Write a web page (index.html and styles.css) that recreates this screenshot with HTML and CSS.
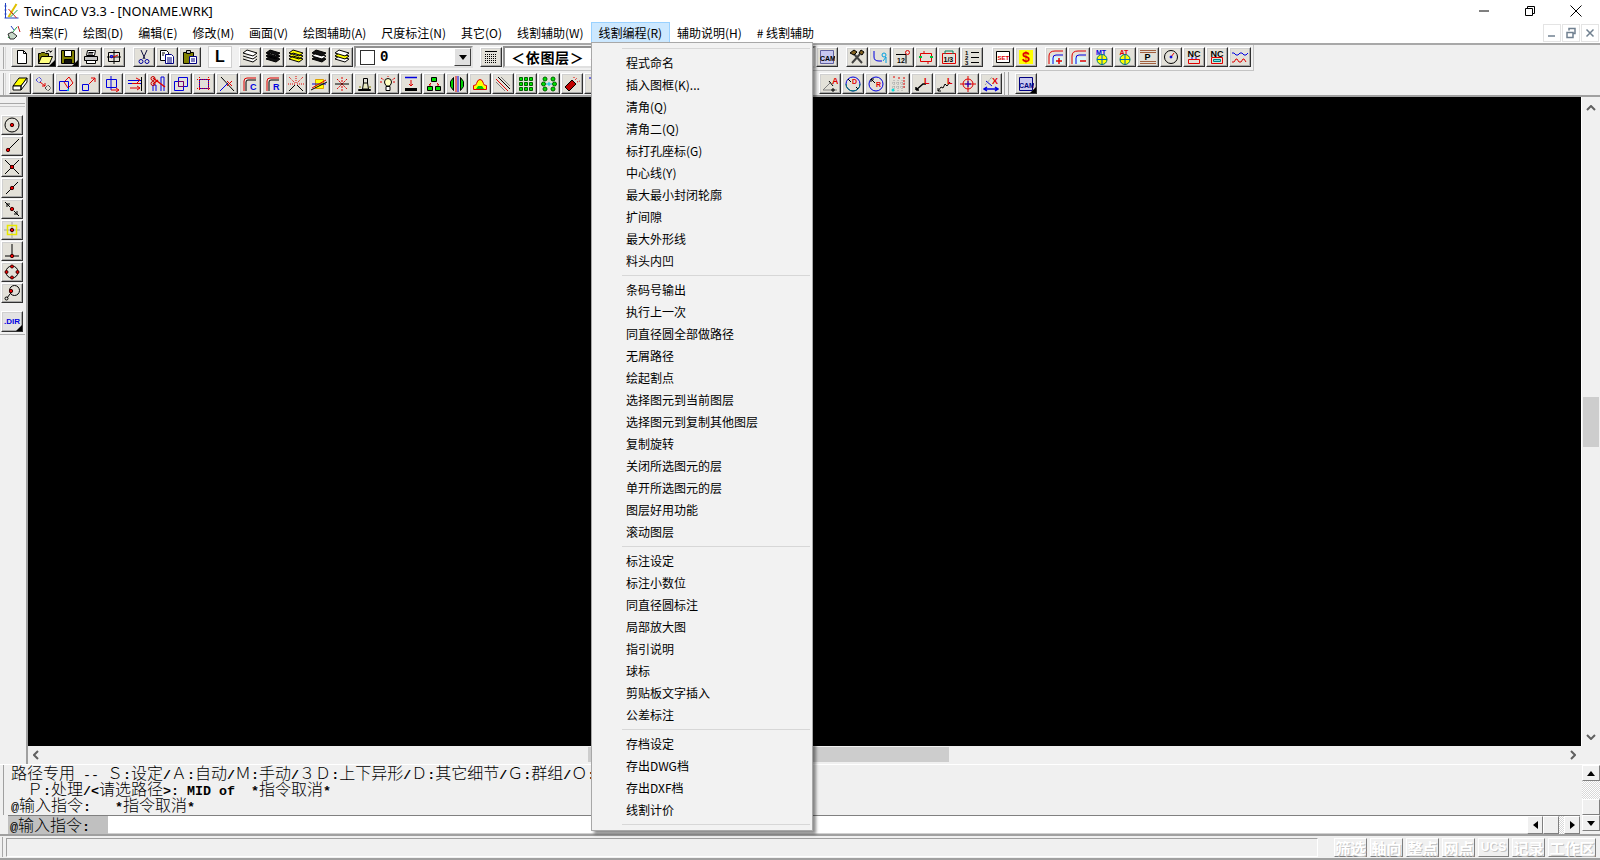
FILE: index.html
```html
<!DOCTYPE html>
<html lang="zh">
<head>
<meta charset="utf-8">
<title>TwinCAD V3.3</title>
<link rel="stylesheet" href="styles.css">
</head>
<body>
<header class="title">
  <svg class="app-ico" viewBox="0 0 16 18"><path stroke="#2040c0" d="M2 1v15M1 16h14M1 4h2M1 8h2M1 12h2"/><path stroke="#e0c000" stroke-width="2" d="M5 15L13 2"/><path stroke="#d02020" d="M5 7l8 9"/><path stroke="#20a040" d="M7 15l7-7"/></svg>
  <span class="title-text">TwinCAD V3.3 - [NONAME.WRK]</span>
  <div class="win-btns">
    <svg viewBox="0 0 12 12"><path d="M1 6h10"/></svg>
    <svg viewBox="0 0 12 12"><path d="M1.5 3.5h7v7h-7zM3.5 3.5v-2h7v7h-2"/></svg>
    <svg viewBox="0 0 12 12"><path d="M.5 .5l11 11M11.5 .5l-11 11"/></svg>
  </div>
</header>
<nav class="menubar">
  <svg class="mdi-ico" viewBox="0 0 16 16"><path stroke="#20a040" d="M2 14L11 3"/><path fill="#c8d8c8" stroke="#303030" d="M2 10l4-2 5 4-3 3H4z"/><path stroke="#c02020" d="M12 2l2 6"/><path stroke="#2040c0" d="M5 2l3 4"/></svg>
  <span class="mi">档案(F)</span><span class="mi">绘图(D)</span><span class="mi">编辑(E)</span><span class="mi">修改(M)</span><span class="mi">画面(V)</span><span class="mi">绘图辅助(A)</span><span class="mi">尺度标注(N)</span><span class="mi">其它(O)</span><span class="mi">线割辅助(W)</span><span class="mi mi-on">线割编程(R)</span><span class="mi">辅助说明(H)</span><span class="mi"># 线割辅助</span>
  <div class="mdi-btns">
    <span class="mdi-b"><svg viewBox="0 0 12 12"><path d="M2 9h7"/></svg></span>
    <span class="mdi-b"><svg viewBox="0 0 12 12"><path d="M2 5.5h6v5H2zM4 3.5V1.5h6v5H8"/></svg></span>
    <span class="mdi-b"><svg viewBox="0 0 12 12"><path d="M2.5 2.5l7 7M9.5 2.5l-7 7"/></svg></span>
  </div>
</nav>

<section class="toolbars">
  <div class="tb-row r1">
    <span class="grip"></span>
    <span class="btn"><svg class="i" viewBox="0 0 16 16"><path fill="#fff" d="M3.5 1.5h6l3 3v10h-9z"/><path d="M9.5 1.5v3h3"/></svg></span>
    <span class="btn more"><svg class="i" viewBox="0 0 16 16"><path fill="#808000" d="M1.5 14.5v-10h2l1-1h3l1 1h3v3h-7l-3 7z"/><path fill="#ffff80" d="M1.5 14.5l3-7h11l-3 7z"/><path d="M9 3q3-3 5 0l-1 0m1 0l1-1.500"/></svg></span>
    <span class="btn more"><svg class="i" viewBox="0 0 16 16"><path fill="#808000" d="M1.500 1.500h13v13h-13z"/><path fill="#fff" d="M4.500 1.500h7v6h-7z"/><path fill="#101010" d="M4.500 10.500h7v4h-7z"/></svg></span>
    <span class="btn"><svg class="i" viewBox="0 0 16 16"><path fill="#fff" d="M4.500 1.500h8l-1 5h-8z"/><path fill="#c8c8c8" d="M1.500 7.500h13v4h-13z"/><path fill="#fff" d="M3.500 11.500h9v3h-9z"/><path d="M5.500 3.500h5M5 5h5"/></svg></span>
    <span class="btn"><svg class="i" viewBox="0 0 16 16"><path d="M2.500 3.500h11v9h-11zM8 1v14M1 8h14"/><path stroke="#e00000" d="M5 9l7-3"/><path stroke="#0000e0" d="M4.500 6.500h2v2h-2z"/></svg></span>
    <span class="gap g8"></span>
    <span class="btn"><svg class="i" viewBox="0 0 16 16"><path stroke="#101040" d="M5 1l4 9M11 1l-4 9"/><circle cx="5" cy="12.500" r="2" stroke="#0000a0"/><circle cx="11" cy="12.500" r="2" stroke="#0000a0"/></svg></span>
    <span class="btn"><svg class="i" viewBox="0 0 16 16"><path fill="#fff" d="M1.500 1.500h6l2 2v8h-8z"/><path fill="#fff" stroke="#000080" d="M6.500 5.500h6l2 2v7h-8z"/><path d="M3 4h3M3 6h2" /><path stroke="#000080" d="M8 9h5M8 11h5M8 13h5"/></svg></span>
    <span class="btn"><svg class="i" viewBox="0 0 16 16"><path fill="#808000" d="M1.500 3.500h10v11h-10z"/><path fill="#c0c0c0" d="M4.500 1.500h4v3h-4z"/><path fill="#fff" stroke="#000080" d="M7.500 7.500h7v7h-7z"/><path stroke="#000080" d="M9 10h4M9 12h4"/></svg></span>
    <span class="gap g7"></span>
    <span class="btn btn-l">L</span>
    <span class="gap g7"></span>
    <span class="btn"><svg class="i" viewBox="0 0 16 16"><path d="M1 4l4-3 10 3-4 3zM1 7l10 3 4-3M1 10l10 3 4-3" fill="#fff"/></svg></span>
    <span class="btn"><svg class="i" viewBox="0 0 16 16"><path fill="#111" d="M1 4l4-3 10 3-4 3zM1 7l10 3 4-3-10-3zM1 10l10 3 4-3-10-3z"/></svg></span>
    <span class="btn"><svg class="i" viewBox="0 0 16 16"><path fill="#ffff00" d="M1 10l10 3 4-3-10-3zM1 7l10 3 4-3-10-3zM1 4l4-3 10 3-4 3z"/></svg></span>
    <span class="btn"><svg class="i" viewBox="0 0 16 16"><path fill="#111" d="M1 10l10 3 4-3-10-3z"/><path fill="#fff" d="M1 7l10 3 4-3-10-3z"/><path fill="#111" d="M1 4l4-3 10 3-4 3z"/></svg></span>
    <span class="btn"><svg class="i" viewBox="0 0 16 16"><path fill="#fff" d="M1 10l10 3 4-3-10-3z"/><path fill="#ffff00" d="M1 7l10 3 4-3-10-3z"/><path fill="#fff" d="M1 4l4-3 10 3-4 3z"/></svg></span>
    <span class="combo combo-a"><span class="swatch"></span><b class="zero">0</b><span class="dd"><svg viewBox="0 0 8 5"><path d="M0 0h8L4 5z"/></svg></span></span>
    <span class="gap g8"></span>
    <span class="btn"><svg class="i" viewBox="0 0 16 16"><path d="M2 2.500h12"/><path stroke-dasharray="1 1" d="M2 5.500h12M2 7.500h12M2 9.500h12M2 11.500h12M2 13.500h12"/></svg></span>
    <span class="combo combo-b"><b class="ltype">＜依图层＞</b><span class="dash">-</span></span>
    <span class="btn"><svg class="i" viewBox="0 0 16 16"><path fill="#c8c8f0" stroke="#6060a0" d="M1.500 1.500h13v13h-13z"/><text class="t7" x="1" y="12" fill="#303090">CAM</text></svg></span>
    <span class="gap g8"></span>
    <span class="btn"><svg class="i" viewBox="0 0 16 16"><path stroke="#404040" stroke-width="2" d="M3 14L11 5M13 14L5 5"/><path fill="#806020" d="M1 4l4-3 3 2-3 3zM15 3l-3-2-2 3 3 2z"/></svg></span>
    <span class="btn"><svg class="i" viewBox="0 0 16 16"><path stroke="#0000e0" d="M2 2v6q0 4 5 4h3"/><circle cx="12" cy="6" r="2" stroke="#00a0e0"/><path stroke="#00a0e0" d="M11 12l3-4v6"/></svg></span>
    <span class="btn"><svg class="i" viewBox="0 0 16 16"><path d="M1 5.500h10v9"/><text class="t7" x="2" y="14">12</text><circle cx="12.500" cy="3.500" r="2" stroke="#e00000"/></svg></span>
    <span class="btn"><svg class="i" viewBox="0 0 16 16"><path stroke="#e00000" d="M2.500 4.500h11v8h-11zM6 2v3M10 12v3"/><path stroke="#00c040" stroke-width="2" d="M1 8h3M12 8h3"/></svg></span>
    <span class="btn"><svg class="i" viewBox="0 0 16 16"><path stroke="#e00000" d="M1.500 4.500h13v10h-13z"/><path stroke="#008060" d="M4 2v3M12 2v3M4 2h8"/><text class="t7" x="2.500" y="13">1/3</text></svg></span>
    <span class="btn"><svg class="i" viewBox="0 0 16 16"><path d="M7 3.500h8M7 8.500h8M7 13.500h8"/><text class="t6" x="1" y="6">1</text><text class="t6" x="1" y="11">2</text><text class="t6" x="1" y="16">3</text></svg></span>
    <span class="gap g9"></span>
    <span class="btn"><svg class="i" viewBox="0 0 16 16"><path d="M1.500 2.500h13v11h-13z" fill="#fff"/><text class="t6 red" x="2.500" y="10.500">SET</text></svg></span>
    <span class="btn"><svg class="i" viewBox="0 0 16 16"><path fill="#ffff00" stroke="none" d="M1 1h14v14H1z"/><text class="t14 red" x="4" y="13">$</text></svg></span>
    <span class="gap g8"></span>
    <span class="btn"><svg class="i" viewBox="0 0 16 16"><path fill="#d8f8f8" stroke="none" d="M2 8h13v7H2z"/><path stroke="#e00000" d="M1 15V7q0-5 6-5h8"/><path stroke="#0000e0" d="M5 15V9q0-3 3-3h7"/><path stroke="#e00000" stroke-width="1.500" d="M8 12h6M11 9v6"/></svg></span>
    <span class="btn"><svg class="i" viewBox="0 0 16 16"><path fill="#d8f8f8" stroke="none" d="M2 8h13v7H2z"/><path stroke="#e00000" d="M1 15V7q0-5 6-5h8"/><path stroke="#0000e0" d="M5 15V9q0-3 3-3h7"/><path stroke="#e00000" stroke-width="1.500" d="M9 12h6"/></svg></span>
    <span class="btn"><svg class="i" viewBox="0 0 16 16"><text class="t7 blue" x="2" y="5.500">MT</text><circle cx="8" cy="10.500" r="5" fill="#ffff00" stroke="#008060"/><path stroke="#0060c0" d="M8 5v11M3 10.500h10"/></svg></span>
    <span class="btn"><svg class="i" viewBox="0 0 16 16"><text class="t7 red" x="2.500" y="5.500">AT</text><circle cx="8" cy="10.500" r="5" fill="#ffff00" stroke="#008060"/><path stroke="#0060c0" d="M8 5v11M3 10.500h10"/></svg></span>
    <span class="btn"><svg class="i" viewBox="0 0 16 16"><path stroke="#a06040" d="M0 1.500h16M0 3.500h16M0 12.500h16M0 14.500h16"/><text class="t8" x="4.500" y="11">P</text></svg></span>
    <span class="btn"><svg class="i" viewBox="0 0 16 16"><circle cx="8" cy="8" r="6.500"/><path stroke="#e00000" d="M8 8l3-4"/><circle cx="8" cy="8" r="1" fill="#0000e0" stroke="#0000e0"/></svg></span>
    <span class="btn"><svg class="i" viewBox="0 0 16 16"><text class="t8" x="1.500" y="7.500">NC</text><path stroke="#0000e0" d="M6 8v3M10 8v3"/><path stroke="#e00000" d="M2.500 10.500h11v4h-11z"/></svg></span>
    <span class="btn"><svg class="i" viewBox="0 0 16 16"><text class="t8" x="1.500" y="7.500">NC</text><path stroke="#e00000" d="M2.500 8.500h11v6h-11z"/><path fill="#80e0e0" stroke="#008080" d="M4.500 10.500h7v2h-7z"/></svg></span>
    <span class="btn"><svg class="i" viewBox="0 0 16 16"><path stroke="#0000e0" d="M0 4h2l2 2h2l2-2h2l2 2h2l2-2"/><path stroke="#e00000" d="M0 13h2l2-3h1l2 3h2l2-3h1l2 3"/></svg></span>
  </div>
  <div class="tb-row r2">
    <span class="grip"></span>
    <span class="btn tall"><svg class="i" viewBox="0 0 16 16"><path fill="#ffff00" d="M1 10l6-8h8l-6 8z"/><path fill="#fff" d="M1 10h8v4H1zM9 10l6-8v4l-6 8z"/></svg></span>
    <span class="btn tall"><svg class="i" viewBox="0 0 16 16"><path stroke="#0000e0" stroke-dasharray="1 1" d="M1 4l3-3 3 3-3 3z"/><path stroke-dasharray="1 1" d="M10 12l3-3 3 3-3 3z"/><path stroke="#e00000" d="M5 6l5 4m0-3v3h-3"/></svg></span>
    <span class="btn tall"><svg class="i" viewBox="0 0 16 16"><path stroke="#e00000" d="M6 6l5-5 4 6-5 5z"/><path stroke="#0000e0" d="M1.500 5.500h9v9h-9z"/><circle cx="10" cy="14" r="1" fill="#00e0e0" stroke="none"/></svg></span>
    <span class="btn tall"><svg class="i" viewBox="0 0 16 16"><path stroke="#0000e0" d="M1.500 8.500h6v6h-6z"/><path stroke="#e00000" d="M8 8l6-6m-4 0h4v4"/></svg></span>
    <span class="btn tall"><svg class="i" viewBox="0 0 16 16"><path stroke="#0000e0" d="M2.500 3.500h10v8h-10zM7 0v14"/><path stroke="#e00000" d="M7 14h8m-3-2l3 2-3 2"/></svg></span>
    <span class="btn tall"><svg class="i" viewBox="0 0 16 16"><path d="M14.500 1v14"/><path stroke="#0000e0" d="M1 4.500h13M1 7.500h13"/><path stroke="#e00000" d="M5 7.500h8M9 2l4 2-3 3M3 12h10m-3-2l3 2-3 2"/></svg></span>
    <span class="btn tall"><svg class="i" viewBox="0 0 16 16"><path stroke="#0000e0" d="M3 15V9h3v6M11 15V1h3v14"/><path stroke="#e00000" stroke-width="1.500" d="M3 2l12 9M3 8l5-4"/><circle cx="3" cy="2.500" r="2" stroke="#c00000"/><circle cx="3" cy="7.500" r="2" stroke="#c00000"/></svg></span>
    <span class="btn tall"><svg class="i" viewBox="0 0 16 16"><path stroke="#0000e0" d="M5.500 1.500h9v9h-9zM1.500 5.500h9v9h-9z"/><path stroke="#e00000" stroke-dasharray="1 1" d="M5.500 5.500h5v5h-5z"/></svg></span>
    <span class="btn tall"><svg class="i" viewBox="0 0 16 16"><path stroke="#0000e0" d="M3.500 3.500h9v9h-9z"/><path stroke="#e00000" stroke-dasharray="1 1" d="M1 3.500h14M1 12.500h14M3.500 1v14M12.500 1v14"/></svg></span>
    <span class="btn tall"><svg class="i" viewBox="0 0 16 16"><path stroke="#0000e0" d="M1 15L9 7"/><path d="M2 1l13 14"/><path stroke="#e00000" d="M8 5l5 5M13 5l-5 5"/></svg></span>
    <span class="btn tall"><svg class="i" viewBox="0 0 16 16"><path stroke="#e00000" d="M2 15V5q0-3 3-3h9"/><path d="M4 15V6q0-2 2-2h8"/><text class="t8 blue" x="8" y="14">C</text></svg></span>
    <span class="btn tall"><svg class="i" viewBox="0 0 16 16"><path stroke="#e00000" d="M2 15V5q0-3 3-3h9"/><path d="M4 15V6q0-2 2-2h8"/><text class="t8 blue" x="8" y="14">R</text></svg></span>
    <span class="btn tall"><svg class="i" viewBox="0 0 16 16"><path d="M1 15l6-6M15 15l-6-6"/><path stroke="#e00000" stroke-dasharray="1 1" d="M8 0v7M1 1l6 6M15 1l-6 6M0 8h7M9 8h7"/></svg></span>
    <span class="btn tall"><svg class="i" viewBox="0 0 16 16"><path fill="#ffff00" stroke="#e0a000" d="M4.500 3.500h8v9h-8z"/><path stroke="#0000e0" d="M1 8h14"/><path stroke="#e00000" d="M1 12L15 4"/><path d="M0 14l16-8"/></svg></span>
    <span class="btn tall"><svg class="i" viewBox="0 0 16 16"><path stroke="#e00000" stroke-dasharray="2 1" d="M8 1v14M3 3l10 10M13 3L3 13"/><path d="M1 8h14"/></svg></span>
    <span class="btn tall"><svg class="i" viewBox="0 0 16 16"><path fill="#e8e8c0" d="M1.500 13.500h12v1h-12zM5.500 13l1-6h4l1 6z"/><path d="M6.500 7V2.500h4V7"/><path stroke="#808000" d="M2 11h2M12 11h2"/></svg></span>
    <span class="btn tall"><svg class="i" viewBox="0 0 16 16"><path fill="#ffffc0" d="M4.500 6a3.500 3.500 0 1 1 7 0q0 2-2 4h-3q-2-2-2-4z"/><path fill="#fff" d="M6 10.500h4v4H6z"/><path stroke="#e00000" stroke-dasharray="2 1" d="M1 2l3 2M15 2l-3 2M8 0v1M0 6h3M13 6h3"/></svg></span>
    <span class="btn tall"><svg class="i" viewBox="0 0 16 16"><path stroke="#0000e0" stroke-width="1.500" d="M2 1.500h12"/><path stroke="#e00000" d="M8 4v6m-2-2l2 2 2-2"/><path stroke="#000" stroke-width="3" d="M2 13.500h12"/></svg></span>
    <span class="btn tall"><svg class="i" viewBox="0 0 16 16"><path fill="#00e000" d="M5.500 1.500h5v4h-5zM1.500 10.500h5v4h-5zM9.500 10.500h5v4h-5z"/><path stroke="#e00000" d="M5 7L3 9h2M11 7l2 2h-2"/></svg></span>
    <span class="btn tall"><svg class="i" viewBox="0 0 16 16"><path fill="#00d000" d="M1.500 5.500l3-4v13l-3-4zM14.500 5.500l-3-4v13l3-4z"/><path stroke="#e00000" d="M7 0v16"/><path stroke="#0000e0" d="M9 0v16"/></svg></span>
    <span class="btn tall"><svg class="i" viewBox="0 0 16 16"><path fill="#ffff00" stroke="#e00000" d="M1.500 13.500v-4q3 0 3-2 1-4 3.500-4t3.500 4q0 2 3 2v4z"/><path fill="#00d000" stroke="none" d="M4 13l2-3h4l2 3z"/></svg></span>
    <span class="btn tall"><svg class="i" viewBox="0 0 16 16"><path stroke="#e00000" d="M1 3l12 12"/><path d="M3 1l12 12"/><path stroke="#808080" d="M1 6l9 9M6 1l9 9"/></svg></span>
    <span class="btn tall"><svg class="i" viewBox="0 0 16 16"><path fill="#00e000" stroke="#006000" d="M1.500 1.500h3v3h-3zM6.500 1.500h3v3h-3zM11.500 1.500h3v3h-3zM1.500 6.500h3v3h-3zM6.500 6.500h3v3h-3zM11.500 6.500h3v3h-3zM1.500 11.500h3v3h-3zM6.500 11.500h3v3h-3zM11.500 11.500h3v3h-3z"/></svg></span>
    <span class="btn tall"><svg class="i" viewBox="0 0 16 16"><g fill="#00e000" stroke="#006000"><circle cx="4" cy="3" r="2"/><circle cx="12" cy="3" r="2"/><circle cx="2.500" cy="8" r="2"/><circle cx="13.500" cy="8" r="2"/><circle cx="4" cy="13" r="2"/><circle cx="12" cy="13" r="2"/></g><path stroke="#00c0e0" d="M5 8h6M8 6v4"/></svg></span>
    <span class="btn tall"><svg class="i" viewBox="0 0 16 16"><path fill="#c00000" d="M1 11l7-7 4 4-7 7z"/><path stroke="#e00000" stroke-dasharray="1 1" d="M11 4l2-2M13 6l3-1M10 1v2"/></svg></span>
    <span class="btn tall"><svg class="i" viewBox="0 0 16 16"><path stroke="#0000e0" d="M2 2h8"/></svg></span>
    <span class="gap g-hidden"></span>
    <span class="btn tall"><svg class="i" viewBox="0 0 16 16"><path stroke="#808080" d="M1 14h14M1 14L9 6"/><text class="t8 red" x="10" y="8">A</text><path d="M7 5l4 5M11 12v4M9 14h4"/></svg></span>
    <span class="btn tall"><svg class="i" viewBox="0 0 16 16"><circle cx="8" cy="8" r="7" stroke="#0000e0"/><path stroke="#008060" d="M1 8a7 7 0 0 0 14 0"/><text class="t7 red" x="7" y="8">D</text><path d="M3 3l3 3M11 11l2 2"/></svg></span>
    <span class="btn tall"><svg class="i" viewBox="0 0 16 16"><circle cx="8" cy="8" r="7" stroke="#0000e0"/><text class="t7 red" x="8" y="11">R</text><path d="M3 3l4 4M3 3h3M3 3v3"/></svg></span>
    <span class="btn tall"><svg class="i" viewBox="0 0 16 16"><path stroke="#a0a0a0" stroke-dasharray="1 1" d="M3 4v11M7 4v11M11 4v11M1 7h14M1 11h14"/><path stroke="#e00000" stroke-dasharray="2 1" d="M2 1h3M8 1v3M13 1v12"/><circle cx="2" cy="14" r="1.500" fill="#00e0e0" stroke="none"/></svg></span>
    <span class="btn tall"><svg class="i" viewBox="0 0 16 16"><path stroke-width="1.500" d="M2 14l7-6h3M2 14h3M2 14v-3"/><text class="t8 red" x="10" y="8">L</text></svg></span>
    <span class="btn tall"><svg class="i" viewBox="0 0 16 16"><path d="M1 15l3-4 2 1 2-4 2 2 3-4"/><path d="M1 15h3M1 15v-3"/><text class="t8 red" x="10" y="8">L</text></svg></span>
    <span class="btn tall"><svg class="i" viewBox="0 0 16 16"><circle cx="8" cy="8" r="5" stroke="#e00000"/><path stroke="#e00000" d="M8 0v16M0 8h16"/><path stroke="#0000e0" d="M5 8h6M8 5v6"/></svg></span>
    <span class="btn tall"><svg class="i" viewBox="0 0 16 16"><text class="t8 red" x="9" y="8">X</text><path stroke="#0000e0" d="M3 5l6 5"/><path stroke="#808080" stroke-dasharray="1 1" d="M2 9l7-8"/><path stroke="#0000e0" stroke-width="1.500" d="M1 13h14m-3-2l3 2-3 2M4 11l-3 2 3 2"/></svg></span>
    <span class="divider"></span>
    <span class="btn tall more"><svg class="i" viewBox="0 0 16 16"><path fill="#c8c8f0" stroke="#000080" d="M1.500 1.500h13v13h-13z"/><text class="t7 navy" x="1" y="12">CAM</text></svg></span>
  </div>
</section>

<main class="main">
  <aside class="leftbar">
    <span class="grip-h"></span>
    <span class="btn"><svg class="i" viewBox="0 0 16 16"><circle cx="8" cy="8" r="7"/><circle class="dot" cx="8" cy="8" r="1.700"/></svg></span>
    <span class="btn"><svg class="i" viewBox="0 0 16 16"><path d="M3 13L15 1"/><circle class="dot" cx="4" cy="12" r="1.700"/></svg></span>
    <span class="btn"><svg class="i" viewBox="0 0 16 16"><path d="M1 1l14 14M15 1L1 15"/><circle class="dot" cx="8" cy="8" r="1.700"/></svg></span>
    <span class="btn"><svg class="i" viewBox="0 0 16 16"><path d="M2 14L14 2"/><circle class="dot" cx="8" cy="8" r="1.700"/></svg></span>
    <span class="btn"><svg class="i" viewBox="0 0 16 16"><path d="M1 1l5 5M15 15l-5-5M3 6V3h3M13 10v3h-3"/><circle class="dot" cx="8" cy="8" r="1.700"/></svg></span>
    <span class="btn"><svg class="i" viewBox="0 0 16 16"><path stroke="#a0a0a0" d="M8 0v16M0 8h16"/><path stroke="#e8e800" stroke-width="1.500" d="M3.500 3.500h9v9h-9z"/><circle class="dot" cx="8" cy="8" r="1.700"/></svg></span>
    <span class="btn"><svg class="i" viewBox="0 0 16 16"><path d="M8 1v12M1 13h14"/><circle class="dot" cx="8" cy="13" r="1.700"/></svg></span>
    <span class="btn"><svg class="i" viewBox="0 0 16 16"><circle cx="8" cy="8" r="6"/><circle class="dot" cx="8" cy="2.500" r="1.500"/><circle class="dot" cx="2.500" cy="8" r="1.500"/><circle class="dot" cx="13.500" cy="8" r="1.500"/><circle class="dot" cx="8" cy="13.500" r="1.500"/></svg></span>
    <span class="btn"><svg class="i" viewBox="0 0 16 16"><circle cx="10.500" cy="5.500" r="5"/><path d="M6 9L3 13"/><circle cx="2.500" cy="13.500" r="1.500"/><circle class="dot" cx="7" cy="6" r="1.700"/></svg></span>
    <span class="btn btn-dir more">.DIR</span>
    <span class="grip-b"></span>
  </aside>
  <div class="work">
    <div class="canvas-row">
      <div class="canvas"></div>
      <div class="vscroll">
        <svg class="chev" viewBox="0 0 10 6"><path d="M1 5l4-4 4 4"/></svg>
        <span class="vthumb"></span>
        <svg class="chev" viewBox="0 0 10 6"><path d="M1 1l4 4 4-4"/></svg>
      </div>
    </div>
    <div class="hscroll">
      <svg class="chev-h" viewBox="0 0 6 10"><path d="M5 1L1 5l4 4"/></svg>
      <span class="hthumb"></span>
      <svg class="chev-h" viewBox="0 0 6 10"><path d="M1 1l4 4-4 4"/></svg>
    </div>
  </div>
</main>

<section class="cmd">
  <div class="cmd-body">
    <div class="log">
      <div class="ln">路径专用<span class="m n"> -- </span>Ｓ<span class="m">:</span>设定<span class="m">/</span>Ａ<span class="m">:</span>自动<span class="m">/</span>Ｍ<span class="m">:</span>手动<span class="m">/</span>３Ｄ<span class="m">:</span>上下异形<span class="m">/</span>Ｄ<span class="m">:</span>其它细节<span class="m">/</span>Ｇ<span class="m">:</span>群组<span class="m">/</span>Ｏ<span class="m">:</span></div>
      <div class="ln"><span class="m">  </span>Ｐ<span class="m">:</span>处理<span class="m">/&lt;</span>请选路径<span class="m">&gt;: MID of  *</span>指令取消<span class="m">*</span></div>
      <div class="ln"><span class="m n">@</span>输入指令<span class="m">:   *</span>指令取消<span class="m">*</span></div>
    </div>
    <div class="input-row">
      <span class="prompt"><span class="m n">@</span>输入指令<span class="m">:</span></span>
      <span class="field"></span>
      <span class="sb-btn"><svg viewBox="0 0 5 8"><path d="M5 0v8L0 4z"/></svg></span>
      <span class="sb-btn blank"></span>
      <span class="dither-h"></span>
      <span class="sb-btn"><svg viewBox="0 0 5 8"><path d="M0 0v8l5-4z"/></svg></span>
    </div>
  </div>
  <div class="cmd-scroll">
    <span class="sb-btn up"><svg viewBox="0 0 8 5"><path d="M0 5h8L4 0z"/></svg></span>
    <span class="dither-v"></span>
    <span class="sb-btn up blank"></span>
    <span class="sb-btn up"><svg viewBox="0 0 8 5"><path d="M0 0h8L4 5z"/></svg></span>
  </div>
</section>

<footer class="status">
  <span class="grip-s"></span>
  <span class="st-field"></span>
  <span class="st-b">筛选</span><span class="st-b">轴向</span><span class="st-b">整点</span><span class="st-b">网点</span><span class="st-b st-ucs">UCS</span><span class="st-b">记录</span><span class="st-b st-wide">工作区</span>
</footer>

<div class="menu">
  <div class="sep"></div>
  <div class="it">程式命名</div><div class="it">插入图框(K)...</div><div class="it">清角(Q)</div><div class="it">清角二(Q)</div><div class="it">标打孔座标(G)</div><div class="it">中心线(Y)</div><div class="it">最大最小封闭轮廓</div><div class="it">扩间隙</div><div class="it">最大外形线</div><div class="it">料头内凹</div>
  <div class="sep"></div>
  <div class="it">条码号输出</div><div class="it">执行上一次</div><div class="it">同直径圆全部做路径</div><div class="it">无屑路径</div><div class="it">绘起割点</div><div class="it">选择图元到当前图层</div><div class="it">选择图元到复制其他图层</div><div class="it">复制旋转</div><div class="it">关闭所选图元的层</div><div class="it">单开所选图元的层</div><div class="it">图层好用功能</div><div class="it">滚动图层</div>
  <div class="sep"></div>
  <div class="it">标注设定</div><div class="it">标注小数位</div><div class="it">同直径圆标注</div><div class="it">局部放大图</div><div class="it">指引说明</div><div class="it">球标</div><div class="it">剪贴板文字插入</div><div class="it">公差标注</div>
  <div class="sep"></div>
  <div class="it">存档设定</div><div class="it">存出DWG档</div><div class="it">存出DXF档</div><div class="it">线割计价</div>
  <div class="sep"></div>
</div>
</body>
</html>
```

FILE: styles.css
```css
* { box-sizing: border-box; }
html, body { margin: 0; padding: 0; }
body {
  width: 1600px; height: 860px; overflow: hidden;
  position: relative;
  display: flex; flex-direction: column;
  background: #f0f0f0; color: #000;
  font: 12px "Noto Sans CJK SC", "Noto Sans", sans-serif;
}
svg { display: block; flex: none; }

/* title bar */
.title { height: 22px; flex: none; display: flex; align-items: center; background: #fff; padding-left: 3px; }
.app-ico { width: 17px; height: 18px; fill: none; margin-right: 4px; }
.title-text { font: 12.8px "Noto Sans", sans-serif; }
.win-btns { margin-left: auto; display: flex; gap: 34px; padding-right: 18px; }
.win-btns svg { width: 12px; height: 12px; fill: none; stroke: #000; }

/* menu bar */
.menubar { height: 21px; flex: none; display: flex; align-items: stretch; background: #fff; padding-left: 6px; }
.mdi-ico { width: 16px; height: 16px; margin: 2px 0 0 0; fill: none; }
.mi { display: flex; align-items: center; padding: 0 6.45px; border: 1px solid transparent; white-space: nowrap; }
.mi-on { background: #cce8ff; border-color: #99d1ff; }
.mdi-btns { margin-left: auto; display: flex; gap: 1px; padding: 2px 1px 1px 0; }
.mdi-b { width: 18px; height: 18px; border: 1px solid #e4e4e4; display: flex; align-items: center; justify-content: center; }
.mdi-b svg { width: 12px; height: 12px; fill: none; stroke: #708090; stroke-width: 1.500; }

/* toolbars */
.toolbars { height: 54px; flex: none; border-top: 2px solid #a8a8a8; border-bottom: 2px solid #a0a0a0; background: #f0f0f0; }
.tb-row { display: flex; align-items: flex-start; }
.r1 { height: 26px; width: 1254px; padding-top: 2px; border-bottom: 1px solid #c4c4c4; border-right: 1px solid #c4c4c4; }
.r2 { height: 24px; padding-top: 2px; }
.grip { width: 3px; height: 22px; flex: none; border-left: 1px solid #a8a8a8; border-right: 1px solid #d8d8d8; margin-left: 3px; margin-right: 5px; }
.r2 .grip { margin-right: 3px; }
.btn {
  position: relative; flex: none;
  width: 22px; height: 20px; margin-right: 1px;
  display: flex; align-items: center; justify-content: center;
  background: #e3e1d9;
  border: 1px solid; border-color: #fff #303030 #303030 #fff;
  box-shadow: inset -1px -1px 0 #a8a8a8, inset 1px 1px 0 #d0d0d0;
}
.tall { height: 21px; }
.i { width: 16px; height: 16px; fill: none; stroke: #000; stroke-width: 1; }
.i text { stroke: none; fill: #000; font-family: "Liberation Sans", sans-serif; font-weight: 700; }
.i text.red { fill: #e00000; }
.i text.blue { fill: #0000e0; }
.i text.navy { fill: #000080; }
.t6 { font-size: 6px; }
.t7 { font-size: 7px; }
.t8 { font-size: 9px; }
.t14 { font-size: 14px; }
.dot { fill: #f00000; stroke: #400000; }
.more::after { content: ""; position: absolute; right: 0; bottom: 0; border: 3px solid; border-color: transparent #000 #000 transparent; }
.gap { flex: none; }
.g7 { width: 6px; }
.g8 { width: 7px; }
.g9 { width: 8px; }
.g-hidden { width: 212px; }
.btn-l { width: 24px; height: 22px; margin-top: -1px; background: #fff; box-shadow: none; border-color: #d0d0d0; font: 700 16px "Liberation Sans", sans-serif; }
.combo { flex: none; height: 22px; margin-top: -1px; display: flex; align-items: center; background: #fff; border: 2px solid; border-color: #909090 #e0e0e0 #e0e0e0 #909090; }
.combo-a { width: 119px; padding-left: 4px; }
.swatch { width: 15px; height: 15px; border: 1px solid #303030; background: #fff; }
.zero { font: 700 14px "Liberation Mono", monospace; margin-left: 5px; }
.dd { margin-left: auto; width: 17px; height: 18px; display: flex; align-items: center; justify-content: center; background: #e0e0e0; border: 1px solid; border-color: #fff #404040 #404040 #fff; }
.dd svg { width: 8px; height: 5px; }
.combo-b { width: 313px; padding-left: 6px; }
.ltype { font: 700 14px "Noto Sans CJK SC", sans-serif; letter-spacing: .7px; }
.dash { color: #0000e0; margin-left: 6px; font-weight: 700; }
.divider { width: 5px; height: 24px; flex: none; margin: -1px 6px 0 1px; border-left: 1px solid #a8a8a8; border-right: 1px solid #a8a8a8; }

/* main */
.main { flex: 1; display: flex; min-height: 0; }
.leftbar { width: 28px; flex: none; display: flex; flex-direction: column; align-items: flex-start; padding: 4px 0 0 1px; border-right: 2px solid #a0a0a0; }
.leftbar .btn { margin-bottom: 1px; }
.grip-h { width: 25px; height: 4px; margin: 2px 0 8px -1px; border-top: 1px solid #a8a8a8; border-bottom: 1px solid #c8c8c8; flex: none; }
.btn-dir { margin-top: 7px; font: 700 8px "Liberation Sans", sans-serif; color: #0000e0; background: #e3e3e3; height: 21px !important; }
.grip-b { width: 25px; height: 1px; margin: 1px 0 0 -1px; background: #b0b0b0; }
.work { flex: 1; display: flex; flex-direction: column; min-width: 0; }
.canvas-row { flex: 1; display: flex; min-height: 0; }
.canvas { flex: 1; background: #000; }
.vscroll { width: 19px; flex: none; display: flex; flex-direction: column; align-items: center; justify-content: space-between; padding: 8px 0 6px; position: relative; border-left: 1px solid #fff; }
.chev { width: 10px; height: 6px; fill: none; stroke: #606060; stroke-width: 2; }
.vthumb { position: absolute; left: 1px; top: 300px; width: 16px; height: 50px; background: #cdcdcd; }
.hscroll { height: 18px; flex: none; display: flex; align-items: center; justify-content: space-between; padding: 0 24px 0 5px; position: relative; }
.chev-h { width: 6px; height: 10px; fill: none; stroke: #606060; stroke-width: 2; }
.hthumb { position: absolute; left: 560px; top: 1px; width: 361px; height: 15px; background: #cdcdcd; }

/* command */
.cmd { height: 70px; flex: none; display: flex; border-top: 1px solid #fff; }
.cmd-body { flex: 1; display: flex; flex-direction: column; min-width: 0; padding-left: 3px; }
.log { flex: 1; border-left: 1px solid #a0a0a0; padding: 0 0 0 7px; }
.ln { font: 300 16px/16px "Noto Sans CJK SC", sans-serif; white-space: pre; height: 16px; position: relative; top: -1px; }
.m { font: 700 13.33px/16px "Liberation Mono", monospace; }
.n { font-weight: 400; }
.input-row { height: 19px; flex: none; display: flex; margin: 0 2px 0 5px; border-top: 1px solid #808080; }
.prompt { width: 100px; flex: none; background: #c0c0c0; padding-left: 2px; font: 300 16px/16px "Noto Sans CJK SC", sans-serif; white-space: pre; }
.field { flex: 1; background: #fff; border-bottom: 1px solid #d0d0d0; }
.sb-btn { width: 16px; flex: none; display: flex; align-items: center; justify-content: center; background: #f0f0f0; border: 1px solid; border-color: #fff #808080 #808080 #fff; }
.sb-btn svg { width: 5px; height: 8px; }
.dither-h { width: 5px; flex: none; background: repeating-conic-gradient(#fff 0 25%, #d8d8d8 0 50%) 0 0 / 2px 2px; }
.cmd-scroll { width: 18px; flex: none; display: flex; flex-direction: column; }
.up { width: 18px; height: 16px; }
.up svg { width: 8px; height: 5px; }
.dither-v { height: 18px; flex: none; background: repeating-conic-gradient(#fff 0 25%, #d8d8d8 0 50%) 0 0 / 2px 2px; }

/* status */
.status { height: 26px; flex: none; display: flex; align-items: center; border-top: 2px solid #a0a0a0; border-bottom: 2px solid #a0a0a0; background: #f0f0f0; padding-right: 4px; }
.grip-s { width: 3px; height: 20px; margin-left: 2px; margin-right: 1px; border-left: 1px solid #a8a8a8; flex: none; }
.st-field { width: 1312px; height: 19px; flex: none; border: 1px solid; border-color: #a0a0a0 #fff #fff #a0a0a0; margin-right: 16px; }
.st-b { width: 33px; height: 19px; flex: none; margin-right: 3px; display: flex; align-items: center; justify-content: center; font: 700 15px/17px "Noto Sans CJK SC", sans-serif; color: #fff; text-shadow: 1px 1px 0 #c4c4c4; border: 1px solid; border-color: #fff #808080 #808080 #fff; white-space: nowrap; }
.st-ucs { width: 31px; font: 700 12px "Liberation Sans", sans-serif; }
.st-wide { width: 48px; margin-right: 0; }

/* drop-down menu */
.menu {
  position: absolute; left: 591px; top: 42px; width: 222px; height: 789px;
  padding: 2px 0; background: #f2f2f2;
  border: 1px solid #a8a8a8;
  box-shadow: 3px 3px 3px rgba(0,0,0,.45);
}
.it { height: 22px; padding-left: 34px; line-height: 21px; white-space: nowrap; }
.sep { height: 7px; margin: 0 2px 0 30px; padding-top: 3px; }
.sep::before { content: ""; display: block; height: 1px; background: #d7d7d7; }
```
